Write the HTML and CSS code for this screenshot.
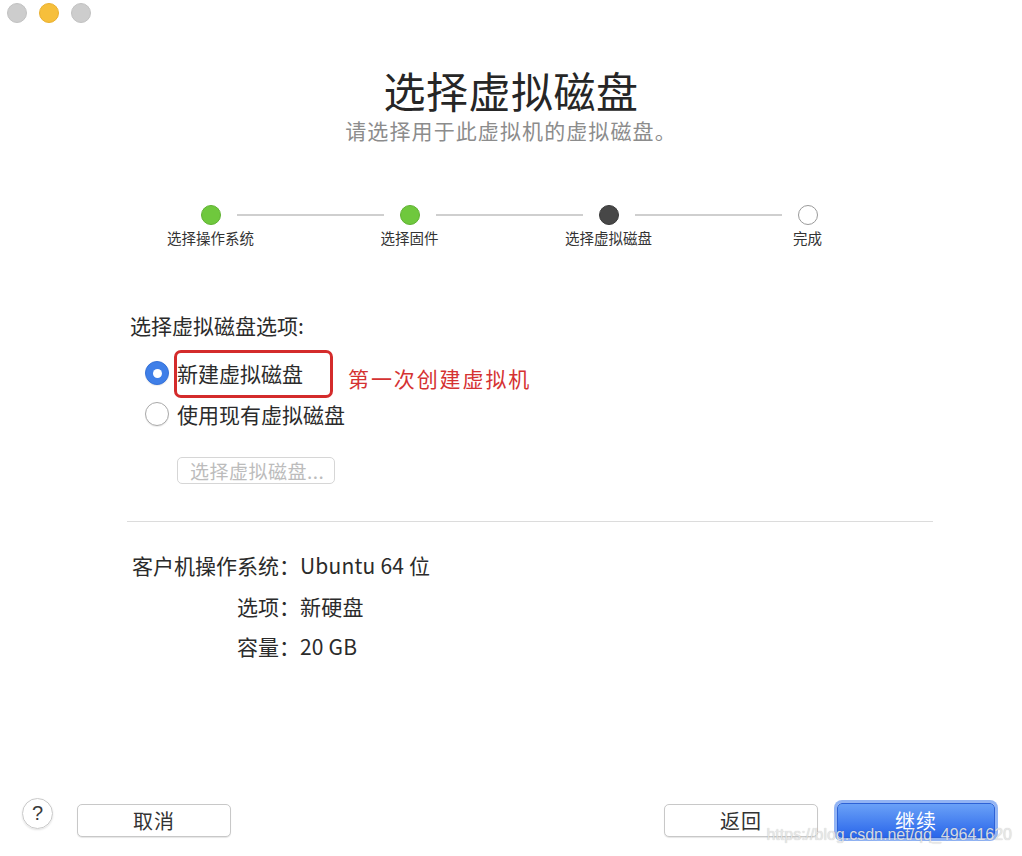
FILE: index.html
```html
<!DOCTYPE html>
<html lang="zh-CN">
<head>
<meta charset="utf-8">
<title>选择虚拟磁盘</title>
<link rel="stylesheet" href="styles.css">
</head>
<body>
<div class="window">
  <div class="titlebar">
    <span class="light grey"></span>
    <span class="light yellow"></span>
    <span class="light grey"></span>
  </div>

  <h1 class="title">选择虚拟磁盘</h1>
  <p class="subtitle">请选择用于此虚拟机的虚拟磁盘。</p>

  <div class="track">
    <span class="dot done"></span><span class="line"></span>
    <span class="dot done"></span><span class="line"></span>
    <span class="dot current"></span><span class="line"></span>
    <span class="dot todo"></span>
  </div>
  <div class="labels">
    <span>选择操作系统</span>
    <span>选择固件</span>
    <span>选择虚拟磁盘</span>
    <span>完成</span>
  </div>

  <div class="section-title">选择虚拟磁盘选项:</div>

  <div class="option first">
    <span class="radio checked"></span>
    <span class="opt-label marked">新建虚拟磁盘<span class="callout-box"></span></span>
    <span class="callout-text">第一次创建虚拟机</span>
  </div>
  <div class="option second">
    <span class="radio"></span>
    <span class="opt-label">使用现有虚拟磁盘</span>
  </div>

  <div class="choose-row">
    <span class="btn-disabled">选择虚拟磁盘...</span>
  </div>

  <div class="divider"></div>

  <div class="info">
    <span class="key">客户机操作系统：</span><span class="val">Ubuntu 64 位</span>
    <span class="key">选项：</span><span class="val">新硬盘</span>
    <span class="key">容量：</span><span class="val">20 GB</span>
  </div>

  <div class="footer">
    <span class="help">?</span>
    <span class="btn cancel">取消</span>
    <span class="spacer"></span>
    <span class="btn back">返回</span>
    <span class="btn primary">继续</span>
    <span class="watermark">https://blog.csdn.net/qq_49641620</span>
  </div>
</div>
</body>
</html>
```

FILE: styles.css
```css
* { box-sizing: border-box; }
html, body {
  margin: 0;
  padding: 0;
  background: #ffffff;
}
body {
  font-family: "Noto Sans CJK SC", "Noto Sans", "Liberation Sans", sans-serif;
  color: #2b2b2b;
}
.window {
  width: 1022px;
  height: 856px;
  display: flex;
  flex-direction: column;
  position: relative;
  overflow: hidden;
}

/* title bar */
.titlebar {
  height: 28px;
  display: flex;
  gap: 12px;
  padding: 3px 0 0 7px;
}
.light {
  width: 20px;
  height: 20px;
  border-radius: 50%;
}
.light.grey { background: #cdcdcd; border: 1px solid #c2c2c2; }
.light.yellow { background: #f6bf3b; border: 1px solid #eab02f; }

/* heading */
.title {
  margin: 39px 0 0;
  font-size: 42px;
  line-height: 46px;
  font-weight: 400;
  text-align: center;
  color: #262626;
  letter-spacing: 0.5px;
}
.subtitle {
  margin: 3px 0 0;
  font-size: 21px;
  line-height: 28px;
  text-align: center;
  color: #8c8c8c;
  letter-spacing: 1.1px;
}

/* steps */
.track {
  margin: 61px 0 0 201px;
  display: flex;
  align-items: center;
  height: 20px;
}
.dot {
  width: 20px;
  height: 20px;
  border-radius: 50%;
  flex: none;
}
.dot.done { background: #6fc83d; border: 1px solid #5fb232; }
.dot.current { background: #474747; border: 1px solid #3a3a3a; }
.dot.todo { background: #fff; border: 1px solid #9a9a9a; }
.line {
  width: 147px;
  height: 2px;
  margin: 0 16px;
  background: #cfcfcf;
  flex: none;
}
.labels {
  margin: 4px 0 0 111px;
  display: grid;
  grid-template-columns: repeat(4, 199px);
  font-size: 14.5px;
  line-height: 18px;
  color: #333;
}
.labels span { text-align: center; }

/* options */
.section-title {
  margin: 66px 0 0 130px;
  font-size: 21px;
  line-height: 24px;
  color: #2b2b2b;
}
.option {
  display: flex;
  align-items: center;
  height: 30px;
  margin-left: 145px;
  font-size: 21px;
  color: #2b2b2b;
}
.option.first { margin-top: 21px; }
.option.second { margin-top: 11px; }
.radio {
  width: 24px;
  height: 24px;
  border-radius: 50%;
  border: 1px solid #a9a9a9;
  background: #fff;
  box-shadow: 0 1px 1px rgba(0,0,0,0.08);
  flex: none;
  display: flex;
  align-items: center;
  justify-content: center;
}
.radio.checked {
  background: #3f7fe8;
  border-color: #3672d8;
}
.radio.checked::after {
  content: "";
  width: 9px;
  height: 9px;
  border-radius: 50%;
  background: #fff;
}
.opt-label {
  margin-left: 8px;
  line-height: 30px;
}
.marked { position: relative; }
.callout-box {
  position: absolute;
  left: -3px;
  top: -8px;
  width: 159px;
  height: 48px;
  border: 3px solid #d42b2b;
  border-radius: 7px;
}
.callout-text {
  margin-left: 45px;
  padding-top: 10px;
  color: #d53232;
  letter-spacing: 1.9px;
}

.choose-row {
  margin: 28px 0 0 177px;
  display: flex;
}
.btn-disabled {
  width: 158px;
  height: 27px;
  border: 1px solid #d6d6d6;
  border-radius: 5px;
  font-size: 19px;
  line-height: 25px;
  color: #bcbcbc;
  padding-left: 12px;
  letter-spacing: 0.5px;
  white-space: nowrap;
}

.divider {
  margin: 37px 89px 0 127px;
  height: 1px;
  background: #dcdcdc;
}

.info {
  margin: 28px 0 0 122px;
  display: grid;
  grid-template-columns: 178px auto;
  row-gap: 10.5px;
  font-size: 21px;
  line-height: 30px;
  color: #2b2b2b;
}
.key { text-align: right; }
.val { letter-spacing: 0.2px; }

/* footer */
.footer {
  margin-top: auto;
  display: flex;
  align-items: flex-start;
  padding: 0 27px 18px 22px;
}
.help {
  width: 31px;
  height: 31px;
  border-radius: 50%;
  border: 1px solid #c9c9c9;
  box-shadow: 0 1px 2px rgba(0,0,0,0.12);
  font-family: "Liberation Sans", sans-serif;
  font-size: 20px;
  line-height: 29px;
  text-align: center;
  color: #3a3a3a;
  margin-top: 0;
}
.btn {
  height: 33px;
  border-radius: 5px;
  font-size: 20px;
  line-height: 31px;
  text-align: center;
  margin-top: 6px;
}
.cancel, .back {
  width: 154px;
  border: 1px solid #c8c8c8;
  background: #fff;
  color: #333;
  box-shadow: 0 1px 1px rgba(0,0,0,0.1);
  letter-spacing: 1px;
}
.cancel { margin-left: 24px; }
.spacer { flex: 1; }
.primary {
  width: 158px;
  height: 35px;
  margin-top: 5px;
  margin-left: 19px;
  border: 1px solid #2d62d6;
  background: linear-gradient(#6aa1f7, #2a66ea);
  color: #fff;
  line-height: 33px;
  box-shadow: 0 0 0 3px rgba(110, 155, 240, 0.75);
  letter-spacing: 1px;
}
.watermark {
  position: absolute;
  right: 10px;
  bottom: 11px;
  font-family: "Liberation Sans", Arial, sans-serif;
  font-size: 16px;
  line-height: 20px;
  color: rgba(235, 235, 235, 0.9);
  text-shadow: 0 0 1px rgba(0,0,0,0.25);
}
```
